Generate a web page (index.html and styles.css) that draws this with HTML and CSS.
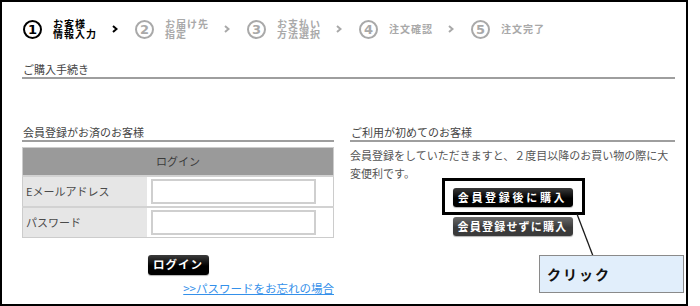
FILE: index.html
```html
<!DOCTYPE html>
<html lang="ja">
<head>
  <meta charset="UTF-8" />
  <title>ご購入手続き</title>
  <link rel="stylesheet" href="styles.css">
</head>
<body>
  <div class="frame">
    <ol class="steps">
      <li class="step current">
        <span class="num">1</span>
        <span class="label">お客様<br>情報入力</span>
        <svg class="arrow" viewBox="0 0 6 8"><polyline points="1,1 4.5,4 1,7"/></svg>
      </li>
      <li class="step">
        <span class="num">2</span>
        <span class="label">お届け先<br>指定</span>
        <svg class="arrow" viewBox="0 0 6 8"><polyline points="1,1 4.5,4 1,7"/></svg>
      </li>
      <li class="step">
        <span class="num">3</span>
        <span class="label">お支払い<br>方法選択</span>
        <svg class="arrow" viewBox="0 0 6 8"><polyline points="1,1 4.5,4 1,7"/></svg>
      </li>
      <li class="step">
        <span class="num">4</span>
        <span class="label">注文確認</span>
        <svg class="arrow" viewBox="0 0 6 8"><polyline points="1,1 4.5,4 1,7"/></svg>
      </li>
      <li class="step">
        <span class="num">5</span>
        <span class="label">注文完了</span>
      </li>
    </ol>

    <h2 class="page-title">ご購入手続き</h2>

    <div class="columns">
      <section class="col member">
        <h3 class="col-title">会員登録がお済のお客様</h3>
        <table class="login-table">
          <tr><th colspan="2">ログイン</th></tr>
          <tr>
            <td class="lbl">Eメールアドレス</td>
            <td class="field"><input type="text"></td>
          </tr>
          <tr>
            <td class="lbl">パスワード</td>
            <td class="field"><input type="password"></td>
          </tr>
        </table>
        <div class="login-row"><button class="btn btn-login">ログイン</button></div>
        <p class="forgot"><a href="#">&gt;&gt;パスワードをお忘れの場合</a></p>
      </section>

      <section class="col guest">
        <h3 class="col-title">ご利用が初めてのお客様</h3>
        <p class="guest-text">会員登録をしていただきますと、２度目以降のお買い物の際に大変便利です。</p>
        <div class="buy-buttons">
          <button class="btn btn-register">会員登録後に購入</button>
          <button class="btn btn-guest">会員登録せずに購入</button>
        </div>
      </section>
    </div>

    <!-- annotation -->
    <div class="highlight"></div>
    <svg class="pointer" viewBox="0 0 20 46"><line x1="2" y1="2" x2="18" y2="44"/></svg>
    <div class="callout">クリック</div>
  </div>
</body>
</html>
```

FILE: styles.css
```css
* {
  box-sizing: border-box;
}

body {
  margin: 0;
  background: #fff;
  font-family: "Noto Sans CJK JP", "Noto Sans", sans-serif;
  color: #555;
}

.frame {
  position: relative;
  width: 688px;
  height: 306px;
  border: 2px solid #000;
  padding: 0 11px 0 20px;
  overflow: hidden;
}

/* steps */
.steps {
  list-style: none;
  margin: 0;
  padding: 17px 0 0 1px;
  display: flex;
}

.step {
  display: flex;
  align-items: center;
  width: 112px;
  height: 20px;
  color: #a9a9a9;
}

.step.current {
  color: #000;
}

.step .num {
  width: 19px;
  height: 19px;
  flex: none;
  border: 2.5px solid currentColor;
  border-radius: 50%;
  display: flex;
  align-items: center;
  justify-content: center;
  font: bold 13px "DejaVu Sans", sans-serif;
}

.step .label {
  width: 50px;
  margin-left: 11px;
  font-size: 10px;
  font-weight: bold;
  line-height: 10px;
  letter-spacing: 1px;
  white-space: nowrap;
}

.step .arrow {
  width: 6px;
  height: 8px;
  margin-left: 9px;
  fill: none;
  stroke: currentColor;
  stroke-width: 2;
}

/* headings */
.page-title,
.col-title {
  margin: 0;
  padding: 0 0 1px 1px;
  font-size: 11px;
  font-weight: normal;
  line-height: 14px;
  color: #444;
  border-bottom: 2px solid #9e9e9e;
}

.page-title {
  margin-top: 23px;
}

.columns {
  display: flex;
  gap: 16px;
  margin-top: 46px;
}

.member {
  width: 312px;
}

.guest {
  width: 325px;
}

/* login table */
.login-table {
  width: 312px;
  margin-top: 5px;
  border-collapse: collapse;
  border: 1px solid #ccc;
  font-size: 11px;
}

.login-table th {
  height: 28px;
  padding: 0;
  background: #9a9a9a;
  font-weight: normal;
  color: #3a3a3a;
}

.login-table td {
  height: 31px;
  padding: 0;
  border-top: 2px solid #d2d2d2;
}

.login-table .lbl {
  width: 124px;
  padding-left: 3px;
  background: #e6e6e6;
  color: #4a4a4a;
}

.login-table .field {
  padding-left: 4px;
}

.login-table input {
  display: block;
  width: 165px;
  height: 25px;
  border: 2px solid #cfcfcf;
  background: #fff;
}

.btn {
  padding: 0;
  border: none;
  border-radius: 3px;
  color: #fff;
  font-family: "Noto Sans CJK JP", sans-serif;
  font-weight: bold;
  font-size: 11px;
  line-height: 1;
  box-shadow: 0 1px 1px rgba(0, 0, 0, 0.3);
}

.login-row {
  margin-top: 12px;
  text-align: center;
}

.btn-login {
  width: 61px;
  height: 20px;
  font-size: 11.5px;
  letter-spacing: 1px;
  background: linear-gradient(#3c3c3c, #000 55%);
}

.forgot {
  margin: 6px 0 0;
  text-align: right;
  font-size: 11.5px;
  line-height: 14px;
}

.forgot a {
  color: #3490ea;
}

/* guest */
.guest-text {
  margin: 4px 0 0;
  font-size: 11px;
  line-height: 18px;
  color: #555;
}

.buy-buttons {
  display: flex;
  flex-direction: column;
  align-items: center;
  gap: 10px;
  margin-top: 6px;
}

.btn-register {
  width: 120px;
  height: 19px;
  letter-spacing: 2.7px;
  background: linear-gradient(#3a3a3a, #000 55%);
}

.btn-guest {
  width: 120px;
  height: 19px;
  letter-spacing: 1.2px;
  background: linear-gradient(#6a6a6a, #3a3a3a 55%);
}

/* annotation overlay */
.highlight {
  position: absolute;
  left: 440px;
  top: 176px;
  width: 143px;
  height: 37px;
  border: 3px solid #000;
}

.pointer {
  position: absolute;
  left: 573px;
  top: 210px;
  width: 20px;
  height: 46px;
  stroke: #1a1a1a;
  stroke-width: 1.3;
}

.callout {
  position: absolute;
  left: 537px;
  top: 253px;
  width: 145px;
  height: 38px;
  padding-left: 7px;
  display: flex;
  align-items: center;
  background: #e1eefb;
  border: 1px solid #8a8a8a;
  color: #111;
  font-size: 14px;
  font-weight: bold;
  letter-spacing: 2px;
}
```
